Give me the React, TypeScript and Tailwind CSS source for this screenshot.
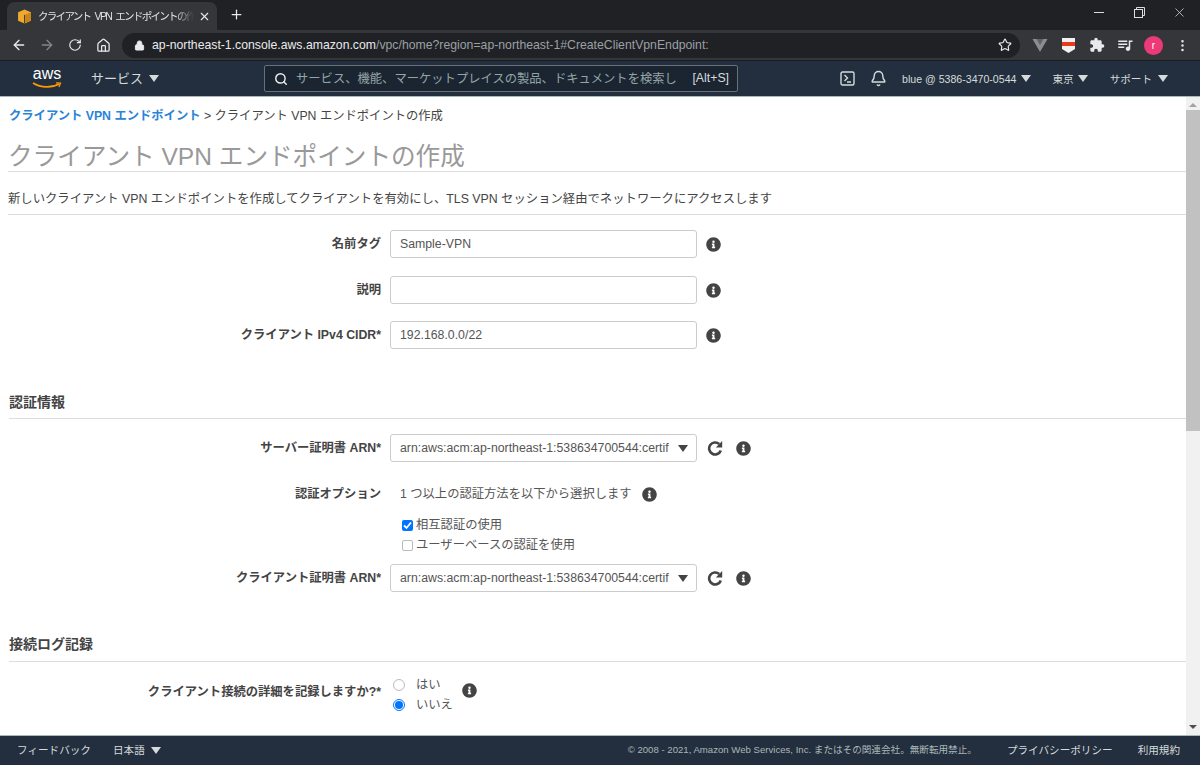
import { ArrowLeft, ArrowRight, Bell, Home, Lock, MoreVertical, Plus, RotateCw, Search, Star, X } from 'lucide-react';
import { FaInfoCircle } from 'react-icons/fa';
import { MdExtension, MdOutlineQueueMusic } from 'react-icons/md';

const Caret = ({ className = 'border-t-[#d5dbdb]' }: { className?: string }) => (
    <span className={`inline-block w-0 h-0 border-x-[5px] border-x-transparent border-t-[7px] ${className}`} />
);

const Info = () => <FaInfoCircle className="text-[#444] shrink-0" size={15} />;

const Refresh = () => (
    <svg width="16" height="16" viewBox="0 0 16 16" fill="none" className="ml-[10px]">
        <path d="M13.8 10.5A6 6 0 1 1 12.2 4" stroke="#444" strokeWidth="2.6" />
        <path d="M15.2 1v6.4H8.8z" fill="#444" />
    </svg>
);

function Row({ label, children, className = '' }: { label: string; children: React.ReactNode; className?: string }) {
    return (
        <div className={`flex items-center ${className}`}>
            <label className="w-[381px] shrink-0 text-right text-[12.3px] font-bold text-[#444]">{label}</label>
            <div className="ml-[9px] flex items-center">{children}</div>
        </div>
    );
}

const TextInput = ({ value = '' }: { value?: string }) => (
    <div className="w-[307px] h-[28px] border border-[#ccc] rounded-[3px] px-[9px] flex items-center text-[12.3px] text-[#555]">{value}</div>
);

const ArnSelect = () => (
    <div className="w-[307px] h-[28px] border border-[#ccc] rounded-[3px] pl-[9px] pr-[8px] flex items-center justify-between text-[12.3px] text-[#555]">
        <span className="w-[270px] h-[18px] leading-[18px] overflow-hidden break-all">arn:aws:acm:ap-northeast-1:538634700544:certif</span>
        <Caret className="border-t-[#444]" />
    </div>
);

function BrowserChrome() {
    return (
        <>
            <div className="h-[30px] bg-[#202124] flex items-end pl-[7px] shrink-0">
                <div className="w-[210px] h-[28px] bg-[#35363a] rounded-t-lg flex items-center pl-[10px] pr-[6px]">
                    <svg width="15" height="15" viewBox="0 0 14 14" className="shrink-0">
                        <path d="M7 0.5 13 3v8l-6 2.5L1 11V3z" fill="#f0a92e" />
                        <path d="M7 5.5 13 3v8l-6 2.5z" fill="#c9851b" />
                        <path d="M7 5.5V13.5" stroke="#35363a" strokeWidth="0.8" />
                    </svg>
                    <span className="ml-[6px] w-[156px] h-[16px] leading-[16px] overflow-hidden whitespace-nowrap text-[10.5px] tracking-[-1.7px] [word-spacing:3px] text-[#dee1e6] [mask-image:linear-gradient(to_right,black_88%,transparent)]">クライアント VPN エンドポイントの作成</span>
                    <X size={13} className="ml-auto text-[#e8eaed]" />
                </div>
                <Plus size={15} className="ml-[12px] mb-[8px] text-[#e8eaed]" />
                <div className="ml-auto h-full flex items-center pr-px pb-[5px] text-[#dadce0]">
                    <span className="w-[40px] flex justify-center"><span className="w-[10px] h-px bg-[#dadce0]" /></span>
                    <span className="w-[40px] flex justify-center">
                        <svg width="11" height="11" viewBox="0 0 11 11" fill="none" stroke="#dadce0">
                            <rect x="0.5" y="2.5" width="8" height="8" fill="#202124" />
                            <path d="M2.5 2.5v-2h8v8h-2" />
                        </svg>
                    </span>
                    <span className="w-[40px] flex justify-center"><X size={15} strokeWidth={1.2} /></span>
                </div>
            </div>
            <div className="h-[31px] bg-[#35363a] flex items-center pl-[11px] pr-[9px] shrink-0 border-b border-[#1b1c1e]">
                <ArrowLeft size={16} className="text-[#e8eaed]" />
                <ArrowRight size={16} className="ml-[12px] text-[#80868b]" />
                <RotateCw size={14} className="ml-[13px] text-[#e8eaed]" />
                <Home size={15} className="ml-[14px] text-[#e8eaed]" />
                <div className="ml-[11px] w-[898px] h-[25px] bg-[#202124] rounded-full flex items-center pl-[12px] pr-[8px]">
                    <Lock size={11} className="text-[#e8eaed]" fill="#e8eaed" />
                    <span className="ml-[7px] text-[12.26px] text-[#e8eaed]">
                        ap-northeast-1.console.aws.amazon.com<span className="text-[#9aa0a6]">/vpc/home?region=ap-northeast-1#CreateClientVpnEndpoint:</span>
                    </span>
                    <Star size={14} className="ml-auto text-[#e8eaed]" />
                </div>
                <svg width="16" height="13" viewBox="0 0 15 13" className="ml-[12px]">
                    <path d="M0 0h15L7.5 13z" fill="#8a8d91" />
                    <path d="M4 0h7L7.5 6z" fill="#5f6266" />
                </svg>
                <svg width="13" height="15" viewBox="0 0 13 15" className="ml-[14px]">
                    <path d="M0 0h13v11l-6.5 4L0 11z" fill="#f1f1f1" />
                    <rect x="0" y="4" width="13" height="4" fill="#e8391d" />
                </svg>
                <MdExtension size={16} className="ml-[14px] text-[#e8eaed]" />
                <MdOutlineQueueMusic size={18} className="ml-[11px] text-[#e8eaed]" />
                <span className="ml-[10px] w-[19px] h-[19px] rounded-full bg-[#ec3a78] text-white text-[10px] flex items-center justify-center">r</span>
                <MoreVertical size={15} className="ml-[12px] text-[#e8eaed]" />
            </div>
        </>
    );
}

function AwsHeader() {
    return (
        <div className="h-[36px] bg-[#232f3e] border-b border-[#aab7b8] flex items-center shrink-0 text-[#d5dbdb] text-[10.6px]">
            <div className="ml-[32px] w-[30px] h-[26px] flex flex-col items-center">
                <span className="text-[16px] leading-[16px] text-white">aws</span>
                <svg width="30" height="8" viewBox="0 0 30 8" fill="none">
                    <path d="M1 1c8 5 19 5 26 1" stroke="#f90" strokeWidth="1.6" />
                    <path d="M24 0.8 28.5 1l-1.5 4" stroke="#f90" strokeWidth="1.3" />
                </svg>
            </div>
            <span className="ml-[29px] text-[13px]">サービス</span>
            <Caret className="ml-[6px]" />
            <div className="ml-[105px] w-[474px] h-[27px] bg-[#1b2532] border border-[#687078] rounded-[2px] flex items-center pl-[9px] pr-[8px] text-[12.3px] text-[#95a5a6]">
                <Search size={14} strokeWidth={2.5} className="text-[#eaeded] shrink-0" />
                <span className="ml-[8px] w-[382px] h-[18px] leading-[18px] overflow-hidden break-all">サービス、機能、マーケットプレイスの製品、ドキュメントを検索し</span>
                <span className="ml-auto text-[#d5dbdb]">[Alt+S]</span>
            </div>
            <svg width="15" height="15" viewBox="0 0 15 15" fill="none" stroke="#d5dbdb" strokeWidth="1.4" className="ml-[102px]">
                <rect x="1" y="1" width="13" height="13" rx="1.5" />
                <path d="M4.5 4 7.5 7 4.5 10M7 11h4" />
            </svg>
            <Bell size={17} className="ml-[15px]" />
            <span className="ml-[15px] mt-[2px]">blue @ 5386-3470-0544</span>
            <Caret className="ml-[5px]" />
            <span className="ml-[21px] mt-[2px]">東京</span>
            <Caret className="ml-[4px]" />
            <span className="ml-[22px] mt-[2px]">サポート</span>
            <Caret className="ml-[6px]" />
        </div>
    );
}

const Section = ({ title, className = '' }: { title: string; className?: string }) => (
    <div className={`ml-[9px] border-b border-[#ddd] text-[14px] font-bold text-[#444] ${className}`}>{title}</div>
);

function CreateForm() {
    return (
        <div className="flex-1 min-w-0 overflow-hidden">
            <div className="ml-[9px] pt-[10px] h-[28px] text-[12.3px] text-[#444] leading-[18px]">
                <span className="font-bold text-[#2a84d8]">クライアント VPN エンドポイント</span> &gt; クライアント VPN エンドポイントの作成
            </div>
            <div className="ml-[8px] mt-[10px] h-[37px] border-b border-[#ddd] text-[24.6px] leading-[44px] text-[#999]">クライアント VPN エンドポイントの作成</div>
            <div className="ml-[8px] h-[43px] border-b border-[#ddd] pt-[18px] text-[12.35px] leading-[18px] text-[#444]">
                新しいクライアント VPN エンドポイントを作成してクライアントを有効にし、TLS VPN セッション経由でネットワークにアクセスします
            </div>

            <Row label="名前タグ" className="mt-[15px]">
                <TextInput value="Sample-VPN" />
                <span className="ml-[9px]"><Info /></span>
            </Row>
            <Row label="説明" className="mt-[18px]">
                <TextInput />
                <span className="ml-[9px]"><Info /></span>
            </Row>
            <Row label="クライアント IPv4 CIDR*" className="mt-[17px]">
                <TextInput value="192.168.0.0/22" />
                <span className="ml-[9px]"><Info /></span>
            </Row>

            <Section title="認証情報" className="mt-[43px] h-[27px]" />

            <Row label="サーバー証明書 ARN*" className="mt-[15px]">
                <ArnSelect />
                <Refresh />
                <span className="ml-[13px]"><Info /></span>
            </Row>
            <Row label="認証オプション" className="mt-[23px]">
                <span className="ml-[10px] text-[12.3px] text-[#555]">1 つ以上の認証方法を以下から選択します</span>
                <span className="ml-[10px]"><Info /></span>
            </Row>
            <div className="ml-[402px] mt-[12px] text-[12.3px] leading-[20px] text-[#555]">
                <div className="flex items-center">
                    <span className="w-[11px] h-[11px] bg-[#0075ff] rounded-[2px] flex items-center justify-center">
                        <svg width="9" height="9" viewBox="0 0 9 9" fill="none" stroke="white" strokeWidth="1.8"><path d="M1 4.5 3.5 7 8 1.5" /></svg>
                    </span>
                    <span className="ml-[3px]">相互認証の使用</span>
                </div>
                <div className="flex items-center">
                    <span className="w-[11px] h-[11px] border border-[#bbb] rounded-[2px]" />
                    <span className="ml-[3px]">ユーザーベースの認証を使用</span>
                </div>
            </div>
            <Row label="クライアント証明書 ARN*" className="mt-[9px]">
                <ArnSelect />
                <Refresh />
                <span className="ml-[13px]"><Info /></span>
            </Row>

            <Section title="接続ログ記録" className="mt-[42px] h-[28px]" />

            <div className="flex mt-[13px]">
                <div className="w-[381px] shrink-0 pt-[8px] text-right text-[12.3px] font-bold text-[#444]">クライアント接続の詳細を記録しますか?*</div>
                <div className="ml-[12px] text-[12.3px] leading-[20px] text-[#555]">
                    <div className="flex items-center">
                        <span className="w-[12px] h-[12px] border border-[#bbb] rounded-full" />
                        <span className="ml-[11px]">はい</span>
                    </div>
                    <div className="flex items-center">
                        <span className="w-[12px] h-[12px] border border-[#0075ff] rounded-full flex items-center justify-center">
                            <span className="w-[8px] h-[8px] bg-[#0075ff] rounded-full" />
                        </span>
                        <span className="ml-[11px]">いいえ</span>
                    </div>
                </div>
                <span className="ml-[9px] mt-[8px]"><Info /></span>
            </div>
        </div>
    );
}

function Scrollbar() {
    return (
        <div className="w-[14px] shrink-0 bg-[#f1f1f1] flex flex-col items-center">
            <span className="mt-[6px] w-0 h-0 border-x-[4px] border-x-transparent border-b-[4px] border-b-[#a3a3a3]" />
            <div className="mt-[3px] w-full h-[321px] bg-[#c1c1c1]" />
            <span className="mt-auto mb-[6px] w-0 h-0 border-x-[4px] border-x-transparent border-t-[4px] border-t-[#505050]" />
        </div>
    );
}

function Footer() {
    return (
        <div className="h-[30px] bg-[#232f3e] border-t border-[#aab7b8] flex items-center shrink-0 text-[10.6px] text-[#d5dbdb] pr-[20px]">
            <span className="ml-[17px]">フィードバック</span>
            <span className="ml-[22px]">日本語</span>
            <Caret className="ml-[6px]" />
            <span className="ml-auto text-[9.6px] text-[#aab7b8]">© 2008 - 2021, Amazon Web Services, Inc. またはその関連会社。無断転用禁止。</span>
            <span className="ml-[30px]">プライバシーポリシー</span>
            <span className="ml-[25px]">利用規約</span>
        </div>
    );
}

export default function App() {
    return (
        <div className="w-[1200px] h-[765px] flex flex-col overflow-hidden bg-white font-['Liberation_Sans','Noto_Sans_CJK_JP',sans-serif]">
            <BrowserChrome />
            <AwsHeader />
            <div className="flex-1 min-h-0 flex">
                <CreateForm />
                <Scrollbar />
            </div>
            <Footer />
        </div>
    );
}
